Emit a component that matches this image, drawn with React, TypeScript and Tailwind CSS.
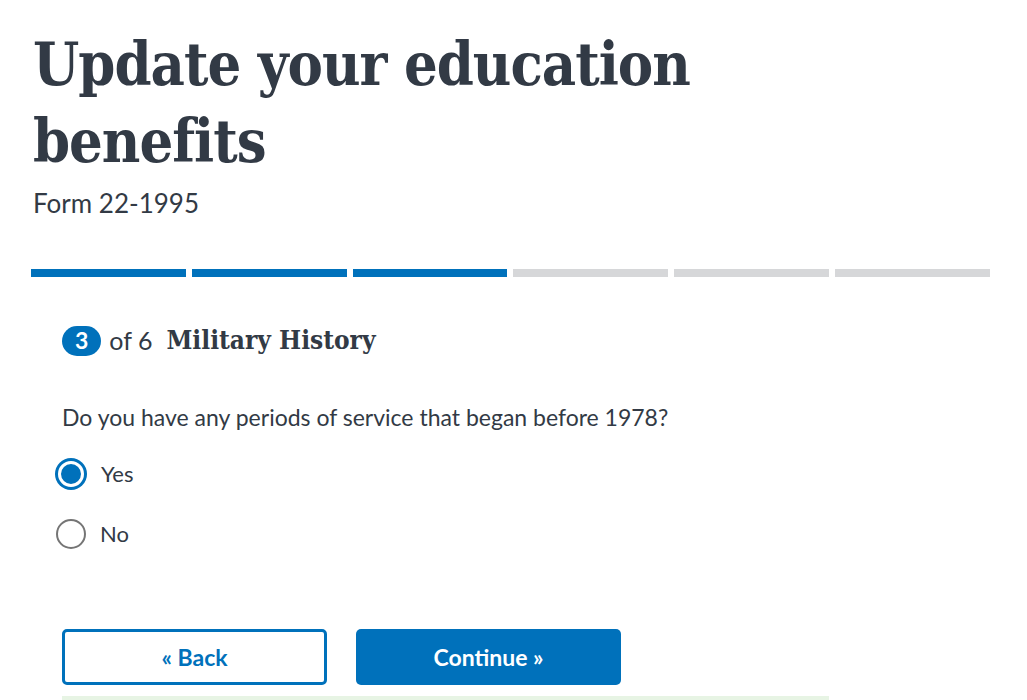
const steps = [true, true, true, false, false, false];

export default function App() {
  return (
    <div className="min-h-[700px] bg-white text-[#323a45] font-['Lato',sans-serif]">
      <div className="pl-[33px] pt-[26px]">
        <h1 className="font-['DejaVu_Serif',serif] font-bold text-[59px] leading-[77px] tracking-[-1px] font-stretch-condensed">
          Update your education
          <br />
          benefits
        </h1>
        <p className="mt-[7px] text-[26px] leading-[32px]">Form 22-1995</p>
      </div>

      <div className="ml-[31px] mt-[50px] flex w-[959px] gap-[6px]">
        {steps.map((done, i) => (
          <div key={i} className={`h-[8px] flex-1 ${done ? "bg-[#0071bb]" : "bg-[#d6d7d9]"}`} />
        ))}
      </div>

      <div className="pl-[62px]">
        <div className="mt-[44px] flex items-center gap-[8px]">
          <span className="flex h-[30px] items-center rounded-full bg-[#0071bb] px-[13px] text-[23px] font-bold text-white">3</span>
          <span className="text-[25px] text-[#323a45]">of 6</span>
          <span className="ml-[6px] font-['DejaVu_Serif',serif] text-[26px] font-bold font-stretch-condensed">Military History</span>
        </div>

        <p className="mt-[42px] text-[23px] leading-[30px]">Do you have any periods of service that began before 1978?</p>

        <div className="mt-[25px] -ml-[7px] flex flex-col gap-[27px]">
          <label className="flex items-center gap-[14px]">
            <span className="flex h-[32px] w-[32px] items-center justify-center rounded-full bg-[#0071bb]">
              <span className="h-[26px] w-[26px] rounded-full border-[3px] border-white bg-[#0071bb]" />
            </span>
            <span className="text-[22px]">Yes</span>
          </label>
          <label className="flex items-center gap-[14px] pl-[1px]">
            <span className="h-[30px] w-[30px] rounded-full border-2 border-[#757575] bg-white" />
            <span className="text-[22px]">No</span>
          </label>
        </div>

        <div className="mt-[79px] flex gap-[29px]">
          <button className="h-[56px] w-[265px] rounded-[5px] border-[3px] border-[#0071bb] bg-white text-[23px] font-bold text-[#0071bb]">
            « Back
          </button>
          <button className="h-[56px] w-[265px] rounded-[5px] bg-[#0071bb] text-[23px] font-bold text-white">
            Continue »
          </button>
        </div>

        <div className="mt-[11px] h-[10px] w-[767px] bg-[#e7f4e4]" />
      </div>
    </div>
  );
}
